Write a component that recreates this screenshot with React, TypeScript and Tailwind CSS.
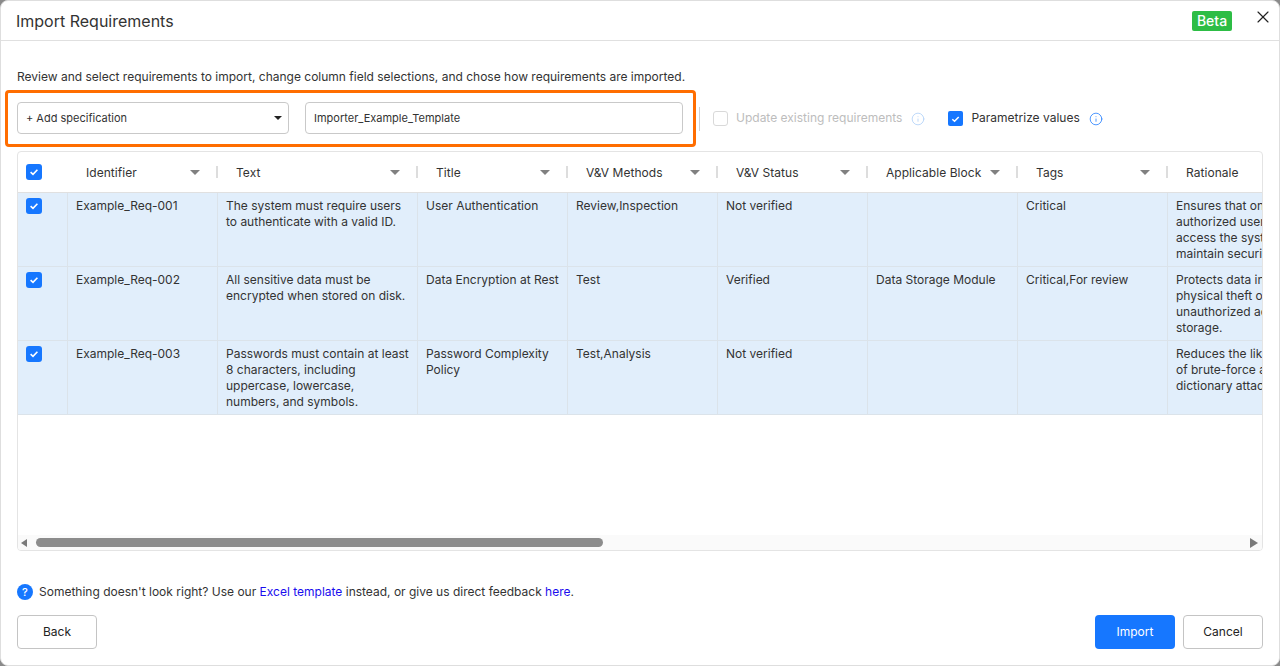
import { Info, X } from "lucide-react"

const columns = ["Identifier", "Text", "Title", "V&V Methods", "V&V Status", "Applicable Block", "Tags", "Rationale"]

const rows = [
  {
    id: "Example_Req-001",
    text: "The system must require users to authenticate with a valid ID.",
    title: "User Authentication",
    methods: "Review,Inspection",
    status: "Not verified",
    block: "",
    tags: "Critical",
    rationale: ["Ensures that only", "authorized users can", "access the system to", "maintain security."],
  },
  {
    id: "Example_Req-002",
    text: "All sensitive data must be encrypted when stored on disk.",
    title: "Data Encryption at Rest",
    methods: "Test",
    status: "Verified",
    block: "Data Storage Module",
    tags: "Critical,For review",
    rationale: ["Protects data in case of", "physical theft or", "unauthorized access to", "storage."],
  },
  {
    id: "Example_Req-003",
    text: "Passwords must contain at least 8 characters, including uppercase, lowercase, numbers, and symbols.",
    title: "Password Complexity Policy",
    methods: "Test,Analysis",
    status: "Not verified",
    block: "",
    tags: "",
    rationale: ["Reduces the likelihood", "of brute-force and", "dictionary attacks."],
  },
]

function Checkbox({ small = false }: { small?: boolean }) {
  return (
    <span
      className={
        small
          ? "flex h-[15px] w-[15px] items-center justify-center rounded-[2px] bg-[#1677ff]"
          : "flex h-4 w-4 items-center justify-center rounded-[3px] bg-[#1677ff]"
      }
    >
      <svg viewBox="0 0 16 16" className="h-4 w-4" fill="none">
        <path d="M4.6 8.2 7 10.4 11.4 5.8" stroke="white" strokeWidth="1.6" />
      </svg>
    </span>
  )
}

function Cell({ children }: { children?: React.ReactNode }) {
  return <div className="border-r border-[#dbe3ea] px-2 pt-[5px] last:border-r-0">{children}</div>
}

export default function App() {
  return (
    <div
      className="h-[666px] w-[1280px] overflow-hidden bg-[#8a8a8a] text-[12px] leading-4 text-[#333333]"
      style={{ fontFamily: "Inter, 'Liberation Sans', sans-serif" }}
    >
      <div className="flex h-full flex-col rounded-lg border border-[#dedede] bg-white">
        {/* Header */}
        <div className="flex h-10 shrink-0 items-center justify-between border-b border-[#e0e0e0] pl-[15px]">
          <h1 className="text-[16px] font-normal text-[#333333]">Import Requirements</h1>
          <div className="flex items-start">
            <span className="w-10 rounded-[2px] bg-[#2dbd45] py-0.5 text-center text-[14px] font-medium text-white">
              Beta
            </span>
            <button className="-mt-[4px] mr-[6px] ml-[21px]">
              <X size={20} strokeWidth={1.4} className="text-[#222222]" />
            </button>
          </div>
        </div>

        {/* Body */}
        <div className="flex min-h-0 flex-1 flex-col px-4">
          <p className="mt-[28px] text-[12px] text-[#333333]">
            Review and select requirements to import, change column field selections, and chose how requirements are
            imported.
          </p>

          <div className="mt-[5px] flex items-center">
            <div className="-ml-3 flex h-[57px] w-[691px] items-start gap-4 rounded-[4px] border-[3px] border-[#ff6d00] pt-[9px] pr-[10px] pl-[9px]">
              <div className="flex h-8 w-[272px] items-center justify-between rounded-[4px] border border-[#c9c9c9] pr-[6px] pl-2 text-[11px]">
                <span>+ Add specification</span>
                <span className="h-0 w-0 border-x-[4px] border-t-[4px] border-x-transparent border-t-[#222222]" />
              </div>
              <div className="flex h-8 flex-1 items-center rounded-[4px] border border-[#c9c9c9] px-2 text-[11px]">
                Importer_Example_Template
              </div>
            </div>
            <span className="ml-[3px] h-6 w-px bg-[#d0d0d0]" />
            <div className="ml-[13px] flex items-center gap-2 text-[#bdbdbd]">
              <span className="block h-[15px] w-[15px] rounded-[3px] border border-[#d9d9d9] bg-white" />
              <span className="pb-[1px]">Update existing requirements</span>
              <Info size={14} strokeWidth={1.3} className="ml-[1px] text-[#a9cdf7]" />
            </div>
            <div className="ml-[23px] flex items-center gap-2">
              <Checkbox small />
              <span className="pb-[1px]">Parametrize values</span>
              <Info size={14} strokeWidth={1.3} className="ml-[1px] text-[#1677ff]" />
            </div>
          </div>

          {/* Table */}
          <div className="mt-[4px] flex h-[400px] flex-col overflow-hidden rounded-[4px] border border-[#e4e4e4]">
            <div className="min-h-0 flex-1 overflow-hidden">
              <div className="grid h-[41px] w-[1400px] grid-cols-[50px_150px_200px_150px_150px_150px_150px_150px_250px] border-b border-[#e0e0e0]">
                <div className="flex items-center pl-2">
                  <Checkbox />
                </div>
                {columns.map((name) => (
                  <div key={name} className="flex items-center pl-[18px]">
                    <span className="flex-1 pt-[2px] tracking-[0.05px]">{name}</span>
                    {name !== "Rationale" && (
                      <>
                        <span className="mt-[1px] h-0 w-0 border-x-[5px] border-t-[5px] border-x-transparent border-t-[#808080]" />
                        <span className="ml-[16px] h-3 w-0.5 bg-[#dddddd]" />
                      </>
                    )}
                  </div>
                ))}
              </div>
              {rows.map((row) => (
                <div
                  key={row.id}
                  className="grid h-[74px] w-[1400px] grid-cols-[50px_150px_200px_150px_150px_150px_150px_150px_250px] border-b border-[#dbe3ea] bg-[#e1eefb]"
                >
                  <div className="border-r border-[#dbe3ea] pt-[5px] pl-2">
                    <Checkbox />
                  </div>
                  <Cell>{row.id}</Cell>
                  <Cell>{row.text}</Cell>
                  <Cell>{row.title}</Cell>
                  <Cell>{row.methods}</Cell>
                  <Cell>{row.status}</Cell>
                  <Cell>{row.block}</Cell>
                  <Cell>{row.tags}</Cell>
                  <Cell>
                    {row.rationale.map((line) => (
                      <div key={line}>{line}</div>
                    ))}
                  </Cell>
                </div>
              ))}
            </div>
            {/* Scrollbar */}
            <div className="flex h-[15px] shrink-0 items-center bg-[#fafafa]">
              <span className="ml-[3px] h-0 w-0 border-y-[4px] border-r-[6px] border-y-transparent border-r-[#7a7a7a]" />
              <span className="ml-[9px] h-[9px] w-[567px] rounded-full bg-[#8c8c8c]" />
              <span className="mr-[4px] ml-auto h-0 w-0 border-y-[5px] border-l-[8px] border-y-transparent border-l-[#7a7a7a]" />
            </div>
          </div>

          <div className="mt-[32px] flex items-center">
            <span className="flex h-4 w-4 items-center justify-center rounded-full bg-[#1677ff] text-[11px] font-medium text-white">
              ?
            </span>
            <p className="ml-[6px] pt-[1px]">
              Something doesn't look right? Use our <a className="text-[#1a0dee]">Excel template</a> instead, or give us
              direct feedback <a className="text-[#1a0dee]">here</a>.
            </p>
          </div>

          <div className="mt-[15px] flex justify-between">
            <button className="h-[34px] w-20 rounded-[4px] border border-[#c4c4c4] text-[#222222]">Back</button>
            <div className="flex gap-2">
              <button className="h-[34px] w-20 rounded-[4px] bg-[#1677ff] text-white">Import</button>
              <button className="h-[34px] w-20 rounded-[4px] border border-[#c4c4c4] text-[#222222]">Cancel</button>
            </div>
          </div>
        </div>
      </div>
    </div>
  )
}
